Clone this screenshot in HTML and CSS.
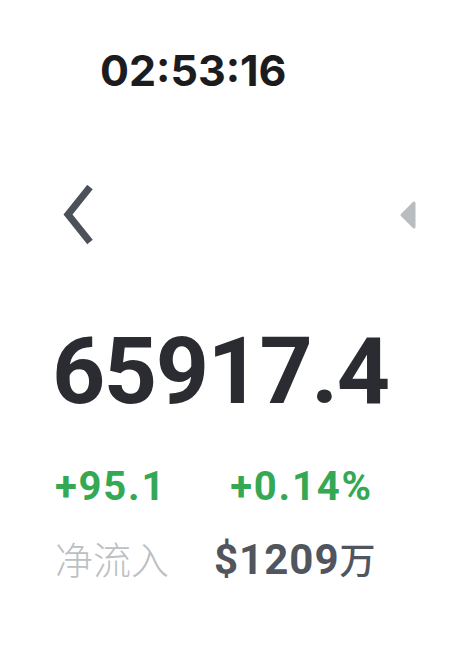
FILE: index.html
```html
<!DOCTYPE html>
<html lang="zh">

<head>
    <meta charset="UTF-8">
    <meta name="viewport" content="width=device-width, initial-scale=1.0">
    <title>Ticker</title>
    <link rel="stylesheet" href="styles.css">
</head>

<body>
    <div class="screen">
        <div class="clock">02:53:16</div>
        <div class="nav-row">
            <svg class="back" width="32" height="60" viewBox="0 0 32 60">
                <path d="M28 2 L6 29.5 L28 57" fill="none" stroke="#4b5059" stroke-width="7" />
            </svg>
            <svg class="caret" width="18" height="30" viewBox="0 0 18 30">
                <path d="M15 3 L3 15 L15 27 Z" fill="#b9bcc1" stroke="#b9bcc1" stroke-width="3" stroke-linejoin="round" />
            </svg>
        </div>
        <div class="price">65917.4</div>
        <div class="change-row">
            <span class="change">+95.1</span>
            <span class="change">+0.14%</span>
        </div>
        <div class="flow-row">
            <span class="flow-label">净流入</span>
            <span class="flow-value">$1209<span class="unit">万</span></span>
        </div>
    </div>
</body>

</html>
```

FILE: styles.css
```css
body {
    margin: 0;
    background-color: #ffffff;
    font-family: Roboto, "Noto Sans CJK SC", sans-serif;
}

.screen {
    width: 464px;
    height: 646px;
    padding: 43px 0 0 55px;
    box-sizing: border-box;
}

.clock {
    font-family: Inter, sans-serif;
    font-weight: 700;
    font-size: 43px;
    line-height: 54px;
    color: #1c1c1e;
    margin-left: 45px;
}

.nav-row {
    display: flex;
    justify-content: space-between;
    align-items: center;
    width: 355px;
    margin-top: 88px;
    margin-left: 7px;
}

.price {
    font-weight: 700;
    font-size: 93px;
    letter-spacing: -1.5px;
    line-height: 110px;
    color: #2a2c31;
    margin-top: 72px;
    margin-left: -3px;
}

.change-row {
    display: flex;
    gap: 64px;
    margin-top: 37px;
}

.change {
    font-weight: 700;
    font-size: 40px;
    letter-spacing: 1.8px;
    line-height: 46px;
    color: #34a853;
}

.flow-row {
    display: flex;
    align-items: baseline;
    gap: 45px;
    margin-top: 20px;
}

.flow-label {
    font-family: "Noto Sans CJK SC", sans-serif;
    font-size: 38px;
    font-weight: 300;
    color: #bcbfc3;
}

.flow-value {
    font-weight: 700;
    font-size: 42px;
    letter-spacing: 1px;
    color: #51555d;
}

.unit {
    font-family: "Noto Sans CJK SC", sans-serif;
    font-weight: 500;
    font-size: 36px;
}
```
